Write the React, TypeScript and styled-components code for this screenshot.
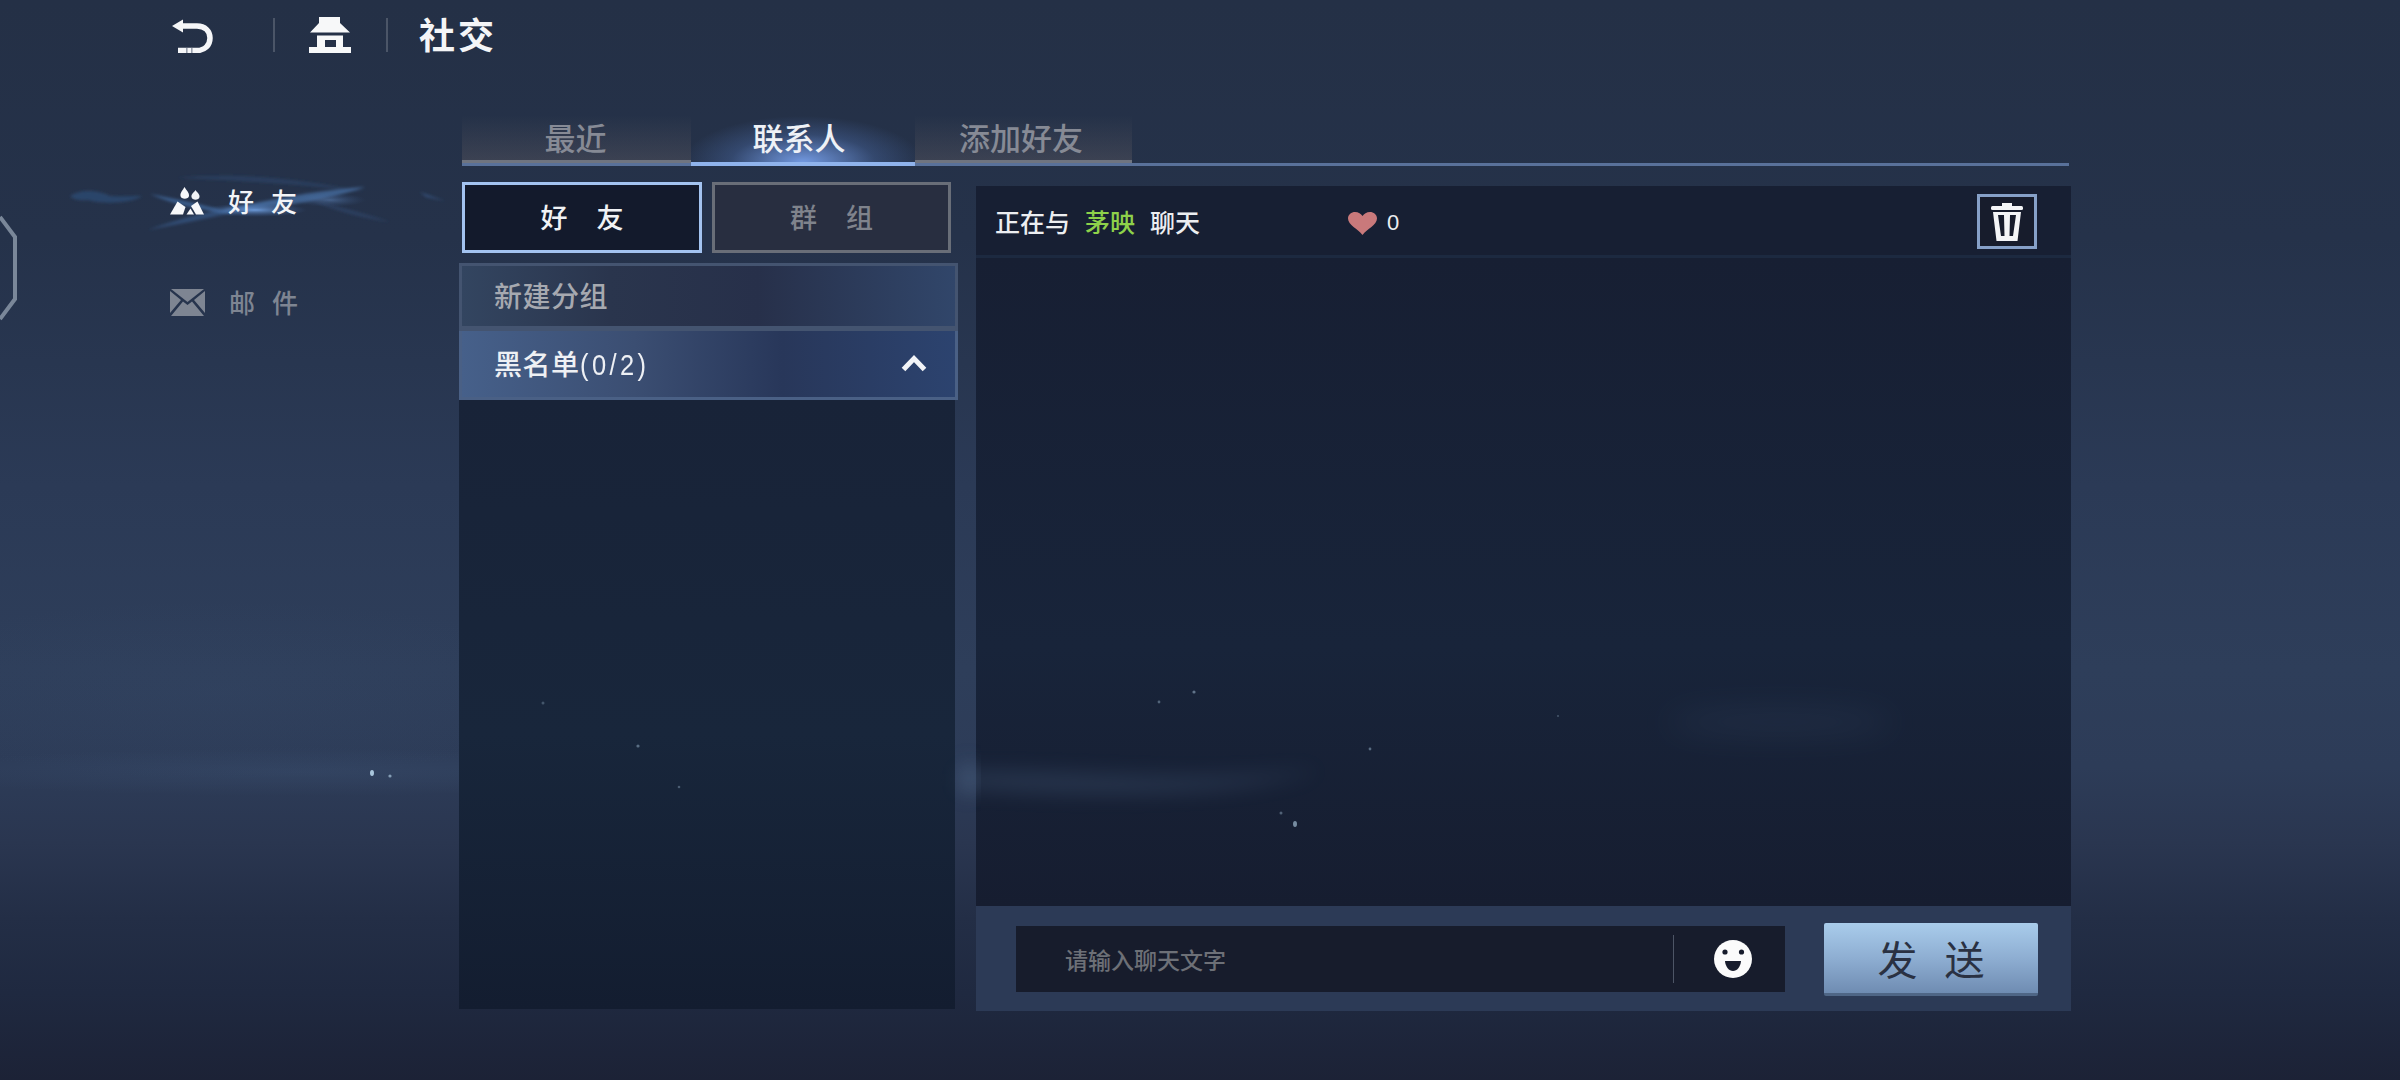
import React from "react";
import styled, { createGlobalStyle } from "styled-components";

const Global = createGlobalStyle`
  html, body { margin: 0; padding: 0; width: 2400px; height: 1080px; overflow: hidden; background: #1c2236; }
  * { box-sizing: border-box; }
`;

const FONT = `"Noto Sans CJK SC", "Noto Sans", sans-serif`;

const Page = styled.div`
  position: relative;
  width: 2400px;
  height: 1080px;
  overflow: hidden;
  font-family: ${FONT};
  background:
    radial-gradient(ellipse 400px 24px at 300px 772px, rgba(70, 95, 130, 0.22), transparent 100%),
    radial-gradient(ellipse 380px 90px at 220px 690px, rgba(70, 95, 130, 0.1), transparent 100%),
    linear-gradient(180deg, #243046 0%, #25324a 22%, #2b3a56 45%, #2e3e5a 62%, #2d3c58 71%, #2a3650 78%, #232e46 85%, #1f2940 92%, #1c2236 100%);
`;

const Overlay = styled.svg`
  position: absolute;
  inset: 0;
  pointer-events: none;
`;

const Content = styled.div`
  position: relative;
  display: flex;
  flex-direction: column;
  height: 100%;
`;

const TopBar = styled.header`
  display: flex;
  align-items: center;
  height: 70px;
  padding-left: 171px;
  color: #fff;
`;

const TopDivider = styled.span<{ $ml: number; $mr: number }>`
  width: 2px;
  height: 34px;
  margin: 0 ${(p) => p.$mr}px 0 ${(p) => p.$ml}px;
  background: rgba(255, 255, 255, 0.18);
`;

const Title = styled.h1`
  margin: 0 0 5px;
  font-size: 36px;
  line-height: 44px;
  font-weight: 700;
  letter-spacing: 3px;
  color: #f4f5f7;
`;

const Body = styled.div`
  display: flex;
  flex: 1;
`;

const Sidebar = styled.nav`
  width: 459px;
  padding-top: 116px;
  padding-left: 170px;
  display: flex;
  flex-direction: column;
  gap: 71px;
`;

const NavItem = styled.div<{ $active?: boolean }>`
  position: relative;
  display: flex;
  align-items: center;
  height: 30px;
  gap: 24px;
  font-size: 26px;
  line-height: 30px;
  font-weight: 500;
  letter-spacing: 17px;
  color: ${(p) => (p.$active ? "#f2f4f7" : "#7e8592")};
`;

const NavLabel = styled.span`
  position: relative;
`;

const NavIconSlot = styled.span`
  position: relative;
  display: flex;
  flex-shrink: 0;
`;

const Wisp = styled.svg`
  position: absolute;
  left: -110px;
  top: -22px;
  pointer-events: none;
`;

const Hexagon = styled.svg`
  position: absolute;
  left: 0;
  top: 215px;
`;

const Main = styled.main`
  width: 1612px;
  display: flex;
  flex-direction: column;
`;

const Tabs = styled.div`
  display: flex;
  margin: 45px 0 0 3px;
  height: 51px;
  border-bottom: 3px solid #59719a;
  width: 1607px;
`;

const Tab = styled.div<{ $active?: boolean; $w: number; $shift: number }>`
  position: relative;
  width: ${(p) => p.$w}px;
  margin-bottom: ${(p) => (p.$active ? "-3px" : "0")};
  padding-right: ${(p) => p.$shift}px;
  display: flex;
  justify-content: center;
  align-items: flex-start;
  font-size: 31px;
  font-weight: 500;
  line-height: 44px;
  color: ${(p) => (p.$active ? "#eef1f6" : "#868a95")};
  background: ${(p) =>
    p.$active
      ? "radial-gradient(ellipse 120px 46px at 50% 100%, rgba(118,158,232,0.95), rgba(80,115,180,0.35) 60%, transparent 100%)"
      : "linear-gradient(180deg, transparent 0%, rgba(150,130,120,0.2) 100%)"};
  border-bottom: ${(p) => (p.$active ? "4px solid #8fb3ec" : "3px solid #6f7480")};
`;

const Columns = styled.div`
  display: flex;
  align-items: flex-start;
`;

const LeftColumn = styled.section`
  width: 499px;
  height: 827px;
  margin-top: 16px;
  display: flex;
  flex-direction: column;
`;

const Segments = styled.div`
  display: flex;
  gap: 10px;
  padding-left: 3px;
  height: 71px;
`;

const Segment = styled.div<{ $active?: boolean; $w: number }>`
  width: ${(p) => p.$w}px;
  display: flex;
  justify-content: center;
  align-items: center;
  padding-bottom: 2px;
  font-size: 27px;
  font-weight: 500;
  letter-spacing: 29px;
  text-indent: 29px;
  border: 3px solid ${(p) => (p.$active ? "#a3c3f0" : "#696e78")};
  background: ${(p) => (p.$active ? "#131a2c" : "#282e40")};
  color: ${(p) => (p.$active ? "#f0f2f5" : "#7f838c")};
`;

const GroupRow = styled.div<{ $open?: boolean; $first?: boolean }>`
  height: ${(p) => (p.$first ? 68 : 69)}px;
  margin-top: ${(p) => (p.$first ? "10px" : "0")};
  display: flex;
  align-items: center;
  justify-content: space-between;
  padding: 0 28px ${(p) => (p.$first ? "3px" : "2px")} 32px;
  font-size: 28px;
  font-weight: 500;
  letter-spacing: 0.5px;
  color: ${(p) => (p.$open ? "#eef0f4" : "#a6a9b0")};
  border: 3px solid ${(p) => (p.$open ? "#4a6085" : "#445470")};
  border-top-width: ${(p) => (p.$open ? "0" : "3px")};
  border-bottom-width: ${(p) => (p.$first ? "5px" : "3px")};
  background: ${(p) =>
    p.$open
      ? "linear-gradient(90deg, #46608a 0%, #3b4e72 35%, #28375a 65%, #2c436f 100%)"
      : "linear-gradient(90deg, #334560 0%, #2a354d 30%, #27304a 60%, #31466a 100%)"};
`;

const Count = styled.span`
  font-family: "Liberation Sans", sans-serif;
  font-weight: 400;
  font-size: 30px;
  letter-spacing: 4px;
  display: inline-block;
  transform-origin: left center;
  transform: scaleX(0.85);
`;

const ListBody = styled.div`
  flex: 1;
  margin-right: 3px;
  background: linear-gradient(180deg, #182338 0%, #18263b 55%, #131d30 100%);
`;

const ChatPanel = styled.section`
  width: 1095px;
  margin-left: 18px;
  margin-top: 20px;
  height: 825px;
  display: flex;
  flex-direction: column;
`;

const ChatHeader = styled.div`
  height: 72px;
  display: flex;
  align-items: center;
  padding: 0 34px 0 19px;
  font-size: 25px;
  font-weight: 500;
  color: #eceef1;
  background: #171f33;
  border-bottom: 3px solid #1c2940;
`;

const Name = styled.span`
  color: #8ed14a;
  margin: 0 15px;
`;

const Likes = styled.div`
  display: flex;
  align-items: center;
  gap: 10px;
  margin-left: 148px;
  padding-top: 5px;
  font-family: "Liberation Sans", sans-serif;
  font-size: 22px;
`;

const TrashButton = styled.div`
  margin-left: auto;
  margin-top: 2px;
  width: 60px;
  height: 55px;
  display: flex;
  align-items: center;
  justify-content: center;
  border: 3px solid #86a0c8;
  background: #171c2c;
`;

const ChatBody = styled.div`
  flex: 1;
  background: linear-gradient(180deg, #171f33 0%, #18243a 60%, #161d30 100%);
`;

const Composer = styled.div`
  height: 105px;
  display: flex;
  align-items: center;
  padding: 1px 33px 0 40px;
  background: #2c3a56;
`;

const InputBox = styled.div`
  width: 769px;
  height: 66px;
  display: flex;
  align-items: center;
  padding-left: 49px;
  background: #171c2c;
  font-size: 23px;
  font-weight: 500;
  color: #6d7077;
`;

const Placeholder = styled.span`
  flex: 1;
`;

const InputDivider = styled.span`
  width: 1px;
  height: 48px;
  background: #4d5566;
`;

const EmojiSlot = styled.div`
  width: 111px;
  padding-left: 7px;
  display: flex;
  justify-content: center;
`;

const SendButton = styled.div`
  width: 214px;
  height: 73px;
  margin-left: auto;
  display: flex;
  align-items: center;
  justify-content: center;
  font-size: 40px;
  letter-spacing: 27px;
  text-indent: 27px;
  color: #2a3142;
  border-radius: 2px;
  background: linear-gradient(180deg, #a9cceb 0%, #8eaed2 50%, #6f8cb2 100%);
  border-bottom: 3px solid #4f6686;
`;

const BackIcon = () => (
  <svg width="42" height="36" viewBox="0 0 42 36" style={{ flexShrink: 0 }}>
    <path d="M12 2.5 L1 9 L12 15.5 Z" fill="#f5f6f8" />
    <path d="M10 9 H26 C34 9 39 14 39 21 C39 28 34 33.5 26 33.5 H7" fill="none" stroke="#f5f6f8" strokeWidth="5.5" />
    <rect x="15" y="31" width="1.6" height="5" fill="#9aa0ad" />
    <rect x="20" y="31" width="1.6" height="5" fill="#9aa0ad" />
  </svg>
);

const HouseIcon = () => (
  <svg width="42" height="36" viewBox="0 0 42 36" style={{ flexShrink: 0 }}>
    <path d="M10 0 H31 V6 L41 15.5 H1 L10 6 Z" fill="#f7f8f9" />
    <path d="M8 18.5 H34 V30 H42 V36 H0 V30 H8 Z M16 23 V30 H27 V23 Z" fill="#f7f8f9" fillRule="evenodd" />
  </svg>
);

const PeopleIcon = () => (
  <svg width="34" height="30" viewBox="0 0 34 30" style={{ flexShrink: 0, position: "relative" }}>
    <path d="M14.5 1 C16 4 19.5 6.5 19 10 C18.5 13.5 11 13.5 10.5 10 C10 6.5 13 4 14.5 1 Z" fill="#f7f8fa" />
    <path d="M25.5 4 C27 6.5 30 8 29.5 11 C29 14.5 22 14.5 21.5 11 C21 8 24 6.5 25.5 4 Z" fill="#f0f2f5" />
    <path d="M0 28.5 L7.5 15.5 L15.5 21 L13 28.5 Z" fill="#f7f8fa" />
    <path d="M16.5 28.5 L20.5 22.5 L24 28.5 Z" fill="#f7f8fa" />
    <path d="M21 20 L27.5 15.5 L34 28.5 L26 28.5 Z" fill="#f7f8fa" />
  </svg>
);

const MailIcon = () => (
  <svg width="35" height="27" viewBox="0 0 35 27" style={{ flexShrink: 0 }}>
    <path d="M1 0 H34 L17.5 13 Z" fill="#7e8592" />
    <path d="M0 2 L11 11 L0 24 Z M35 2 L24 11 L35 24 Z" fill="#7e8592" />
    <path d="M13 12.5 L17.5 16 L22 12.5 L34 27 H1 Z" fill="#7e8592" />
  </svg>
);

const Chevron = () => (
  <svg width="26" height="18" viewBox="0 0 26 18" style={{ flexShrink: 0 }}>
    <path d="M2.5 15.5 L13 4.5 L23.5 15.5" fill="none" stroke="#f2f4f7" strokeWidth="5" />
  </svg>
);

const Heart = () => (
  <svg width="29" height="23" viewBox="0 0 29 23" style={{ flexShrink: 0 }}>
    <path d="M14.5 23 C10 17 0 13 0 6.5 C0 2.5 3.5 0 7 0 C10.5 0 13 2 14.5 4 C16 2 18.5 0 22 0 C25.5 0 29 2.5 29 6.5 C29 13 19 17 14.5 23 Z" fill="#c9797b" />
  </svg>
);

const TrashIcon = () => (
  <svg width="32" height="38" viewBox="0 0 32 38">
    <rect x="11" y="0" width="10" height="3" fill="#f4f5f7" />
    <rect x="0" y="3" width="32" height="4" rx="1.5" fill="#f4f5f7" />
    <path d="M2 9 H30 L26.5 38 H5.5 Z M7 12 L10 33 H13.5 L13 12 Z M19 12 L18.5 33 H22 L25 12 Z" fill="#f4f5f7" fillRule="evenodd" />
  </svg>
);

const Smile = () => (
  <svg width="38" height="38" viewBox="0 0 38 38">
    <circle cx="19" cy="19" r="19" fill="#fbfbfb" />
    <circle cx="11" cy="12" r="2.6" fill="#171c2c" />
    <circle cx="27.5" cy="12" r="2.6" fill="#171c2c" />
    <path d="M11 21 H27 C26.5 27 23 31 19 31 C15 31 11.5 27 11 21 Z" fill="#171c2c" />
  </svg>
);

const OverlayArt = () => (
  <Overlay width="2400" height="1080" viewBox="0 0 2400 1080">
    <defs>
      <filter id="soft" x="-30%" y="-300%" width="160%" height="700%">
        <feGaussianBlur stdDeviation="10" />
      </filter>
      <filter id="softWide" x="-30%" y="-300%" width="160%" height="700%">
        <feGaussianBlur stdDeviation="16" />
      </filter>
    </defs>
    <path d="M960 772 C1060 768 1180 785 1320 770 C1220 800 1080 796 960 788 Z" fill="#4d6585" opacity="0.3" filter="url(#soft)" />
    <ellipse cx="968" cy="778" rx="8" ry="16" fill="#4d6585" opacity="0.5" filter="url(#soft)" />
    <ellipse cx="1780" cy="722" rx="115" ry="14" fill="#4d6585" opacity="0.16" filter="url(#softWide)" />
    <g fill="#a9c6dc">
      <ellipse cx="372" cy="773" rx="2" ry="3" />
      <circle cx="390" cy="776" r="1.6" opacity="0.7" />
      <circle cx="543" cy="703" r="1.5" opacity="0.3" />
      <circle cx="638" cy="746" r="1.6" opacity="0.45" />
      <circle cx="679" cy="787" r="1.3" opacity="0.35" />
      <circle cx="1159" cy="702" r="1.4" opacity="0.4" />
      <circle cx="1194" cy="692" r="1.6" opacity="0.5" />
      <circle cx="1370" cy="749" r="1.4" opacity="0.45" />
      <circle cx="1558" cy="716" r="1.1" opacity="0.3" />
      <circle cx="1281" cy="813" r="1.5" opacity="0.4" />
      <ellipse cx="1295" cy="824" rx="2" ry="3" opacity="0.65" />
    </g>
  </Overlay>
);

const WispArt = () => (
  <Wisp width="400" height="74" viewBox="0 0 400 74">
    <defs>
      <filter id="wispBlur" x="-10%" y="-50%" width="120%" height="200%">
        <feGaussianBlur stdDeviation="1.4" />
      </filter>
      <radialGradient id="wispCore" cx="50%" cy="50%" r="50%">
        <stop offset="0%" stopColor="#6f9ede" stopOpacity="0.95" />
        <stop offset="100%" stopColor="#3c5e92" stopOpacity="0" />
      </radialGradient>
    </defs>
    <g filter="url(#wispBlur)">
      <path d="M10 32 C22 24 40 27 50 32 C60 33 72 32 82 32 C70 40 40 40 28 36 C20 37 14 36 10 32 Z" fill="#2f5480" opacity="0.6" />
      <path d="M90 30 C120 36 150 42 175 50 C140 46 112 40 90 30 Z" fill="#4a7ab8" opacity="0.6" />
      <path d="M88 66 C125 52 170 42 225 36 C180 48 130 58 88 66 Z" fill="#3d6298" opacity="0.55" />
      <path d="M117 14 C170 8 240 14 305 28 C240 20 170 16 117 14 Z" fill="#33507a" opacity="0.4" />
      <path d="M155 48 C205 36 260 26 305 23 C270 36 205 46 155 48 Z" fill="#4a73aa" opacity="0.7" />
      <path d="M255 38 C280 42 305 50 330 58 C300 54 275 46 255 38 Z" fill="#33507a" opacity="0.45" />
      <path d="M360 28 L385 37 L366 33 Z" fill="#3a5e90" opacity="0.6" />
    </g>
    <ellipse cx="195" cy="46" rx="52" ry="7" fill="url(#wispCore)" />
    <ellipse cx="270" cy="36" rx="36" ry="7" fill="url(#wispCore)" opacity="0.45" />
  </Wisp>
);

export default function App() {
  return (
    <Page>
      <Global />
      <Hexagon width="18" height="106" viewBox="0 0 18 106">
        <path d="M0 2 L15 22 V84 L0 104" fill="none" stroke="#7a8799" strokeWidth="4" />
      </Hexagon>
      <Content>
        <TopBar>
          <BackIcon />
          <TopDivider $ml={60} $mr={34} />
          <HouseIcon />
          <TopDivider $ml={35} $mr={31} />
          <Title>社交</Title>
        </TopBar>
        <Body>
          <Sidebar>
            <NavItem $active>
              <WispArt />
              <NavIconSlot><PeopleIcon /></NavIconSlot>
              <NavLabel>好友</NavLabel>
            </NavItem>
            <NavItem>
              <NavIconSlot><MailIcon /></NavIconSlot>
              <NavLabel>邮件</NavLabel>
            </NavItem>
          </Sidebar>
          <Main>
            <Tabs>
              <Tab $w={229} $shift={2}>最近</Tab>
              <Tab $w={224} $shift={8} $active>联系人</Tab>
              <Tab $w={217} $shift={5}>添加好友</Tab>
            </Tabs>
            <Columns>
              <LeftColumn>
                <Segments>
                  <Segment $w={240} $active>好友</Segment>
                  <Segment $w={239}>群组</Segment>
                </Segments>
                <GroupRow $first>新建分组</GroupRow>
                <GroupRow $open>
                  <span>黑名单<Count>(0/2)</Count></span>
                  <Chevron />
                </GroupRow>
                <ListBody />
              </LeftColumn>
              <ChatPanel>
                <ChatHeader>
                  正在与<Name>茅映</Name>聊天
                  <Likes><Heart />0</Likes>
                  <TrashButton><TrashIcon /></TrashButton>
                </ChatHeader>
                <ChatBody />
                <Composer>
                  <InputBox>
                    <Placeholder>请输入聊天文字</Placeholder>
                    <InputDivider />
                    <EmojiSlot><Smile /></EmojiSlot>
                  </InputBox>
                  <SendButton>发送</SendButton>
                </Composer>
              </ChatPanel>
            </Columns>
          </Main>
        </Body>
      </Content>
      <OverlayArt />
    </Page>
  );
}
